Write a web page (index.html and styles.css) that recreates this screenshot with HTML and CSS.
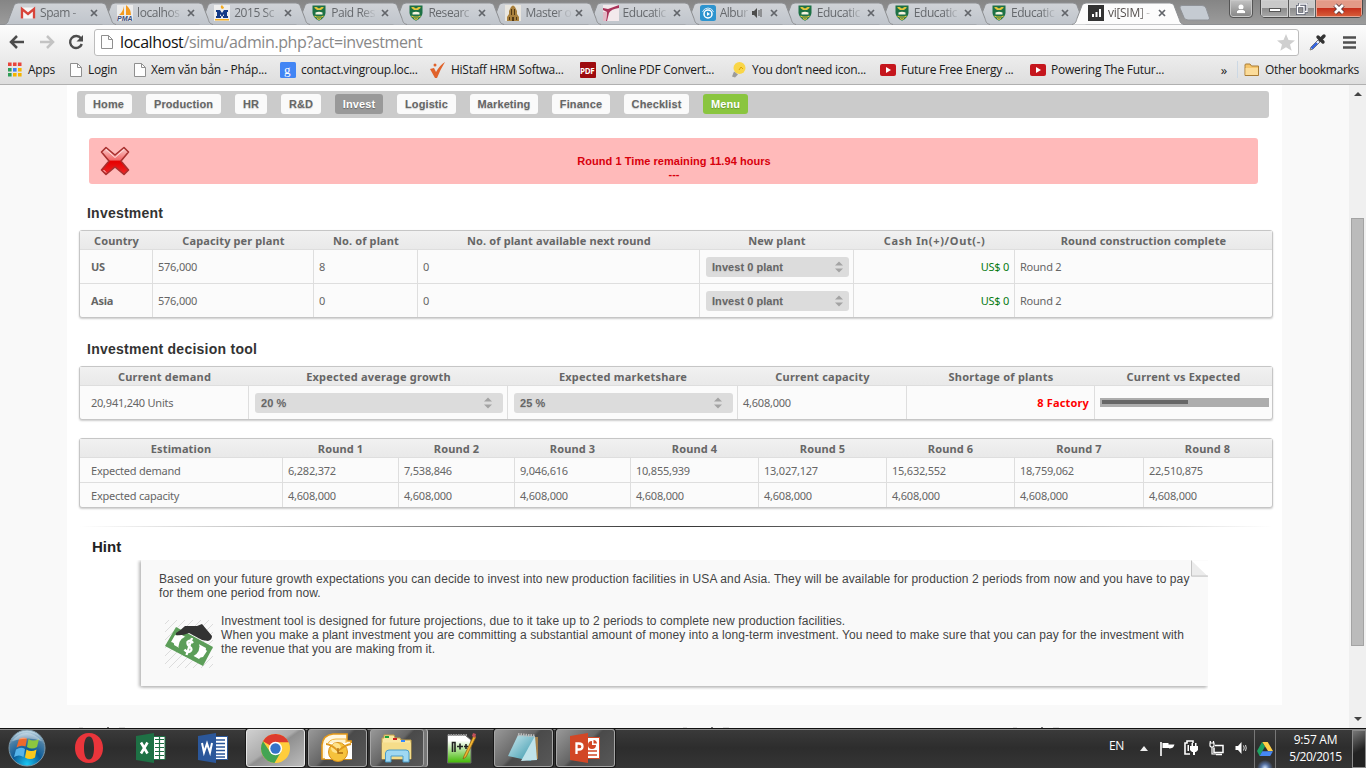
FILE: index.html
```html
<!DOCTYPE html>
<html lang="en">
<head>
<meta charset="utf-8">
<title>vi[SIM] - Investment</title>
<link rel="stylesheet" href="styles.css">
</head>
<body>
<svg class="defs" width="0" height="0">
  <defs>
    <linearGradient id="gTab" x1="0" y1="0" x2="0" y2="1"><stop offset="0" stop-color="#d0d3d7"/><stop offset="1" stop-color="#c0c5cc"/></linearGradient>
    <linearGradient id="gRed" x1="0" y1="0" x2="0" y2="1"><stop offset="0" stop-color="#fbd0d0"/><stop offset=".45" stop-color="#f26a6a"/><stop offset=".52" stop-color="#e60000"/><stop offset="1" stop-color="#ea2a2a"/></linearGradient>
    <radialGradient id="gOrb" cx=".5" cy=".95" r=".9"><stop offset="0" stop-color="#19c8f5"/><stop offset=".45" stop-color="#0c5b98"/><stop offset=".8" stop-color="#4b7fa5"/><stop offset="1" stop-color="#b9d3e2"/></radialGradient>
    <linearGradient id="gNpp" x1="0" y1="0" x2="0" y2="1"><stop offset=".2" stop-color="#fff"/><stop offset="1" stop-color="#3fb800"/></linearGradient>
    <linearGradient id="gNote" x1="0" y1="0" x2="1" y2="1"><stop offset="0" stop-color="#cfeaf0"/><stop offset="1" stop-color="#2f93a8"/></linearGradient>
  </defs>
  <symbol id="tab" viewBox="0 0 112 24"><path d="M0 24C4 23 4 21 5 18L10 5Q11 2.500 14 2.500H98Q101 2.500 102 5L107 18C108 21 108 23 112 24" stroke="#8d8f92" fill="url(#gTab)"/></symbol>
  <symbol id="tabOn" viewBox="0 0 112 24"><path d="M0 24C4 23 4 21 5 18L10 5Q11 2.500 14 2.500H98Q101 2.500 102 5L107 18C108 21 108 23 112 24" stroke="#8d8f92" fill="#fcfcfc"/></symbol>
  <symbol id="crest" viewBox="0 0 16 16"><path d="M1.500.5H14.500V8Q14 13 8 15.800Q2 13 1.500 8Z" fill="#1d7145"/><path d="M3.500 2h2l2.500 1.500L10.500 2h2v1L10 5H6L3.500 3Z" fill="#e2c63c"/><path d="M4.500 7.500Q8 6 11.500 7.500V9.500H4.500Z" fill="#f6f2df"/><path d="M3.500 11l2 1h5l2-1M6 13.500l2 .8 2-.8" fill="none" stroke="#e2c63c" stroke-width="1.200"/></symbol>
  <symbol id="doc" viewBox="0 0 16 16"><path d="M2.500 1.500H9.500L13.500 5.500V14.500H2.500Z" fill="#fdfdfd" stroke="#8f8f8f"/><path d="M9.500 1.500V5.500H13.500" fill="none" stroke="#8f8f8f"/></symbol>
  <symbol id="yt" viewBox="0 0 16 16"><rect y="2" width="16" height="12" rx="2" fill="#c5161d"/><path d="M6 5l5 3-5 3Z" fill="#fff"/></symbol>
  <symbol id="close" viewBox="0 0 8 8"><path d="M1 1l6 6M7 1L1 7" stroke="#62656a" stroke-width="1.700"/></symbol>
  <symbol id="spin" viewBox="0 0 8 12"><path d="M4 .5l4 4H0ZM4 11.500l4-4H0Z" fill="#a3a3a3"/></symbol>
</svg>

<header class="tabstrip">
  <div class="tab"><svg class="shape"><use href="#tab"/></svg><svg class="ico" viewBox="0 0 16 16"><rect x="1" y="2.500" width="14" height="11" fill="#f5f5f5"/><path d="M2 13.500V4l6 5 6-5v9.500" fill="none" stroke="#d8443a" stroke-width="2.300"/></svg><span class="name">Spam -</span><svg class="x"><use href="#close"/></svg></div>
  <div class="tab"><svg class="shape"><use href="#tab"/></svg><svg class="ico" viewBox="0 0 16 16"><rect width="16" height="16" fill="#ececec"/><path d="M7 1v9H2Q6 7 7 1M9 0q5 4 5 10H9Z" fill="#f39a1e"/><text x="0" y="16" class="pma">PMA</text></svg><span class="name">localhos</span><svg class="x"><use href="#close"/></svg></div>
  <div class="tab"><svg class="shape"><use href="#tab"/></svg><svg class="ico" viewBox="0 0 16 16"><rect width="16" height="16" fill="#eee"/><path d="M7 3Q6 1 8 0Q9 2 10 2Q10 4 8 4M1 14h14v1.500H1Z" fill="#f3ab20"/><path d="M2 5h4l2 3 2-3h4v2h-1v4h1v2h-5v-2h1V9l-2 3-2-3v2h1v2H2v-2h1V7H2Z" fill="#143a86"/></svg><span class="name">2015 Sc</span><svg class="x"><use href="#close"/></svg></div>
  <div class="tab"><svg class="shape"><use href="#tab"/></svg><svg class="ico"><use href="#crest"/></svg><span class="name">Paid Res</span><svg class="x"><use href="#close"/></svg></div>
  <div class="tab"><svg class="shape"><use href="#tab"/></svg><svg class="ico"><use href="#crest"/></svg><span class="name">Researc</span><svg class="x"><use href="#close"/></svg></div>
  <div class="tab"><svg class="shape"><use href="#tab"/></svg><svg class="ico" viewBox="0 0 16 16"><rect width="16" height="16" fill="#e9e6df"/><path d="M6 2Q8-1 10 2L12 6v3l2 3v4H2v-4l2-3V6Z" fill="#a9803c"/><path d="M6 4h1v6H6zM9 4h1v6H9zM7 12h2v4H7zM4 12h1v3H4zM11 12h1v3h-1z" fill="#513814"/></svg><span class="name">Master o</span><svg class="x"><use href="#close"/></svg></div>
  <div class="tab"><svg class="shape"><use href="#tab"/></svg><svg class="ico" viewBox="0 0 16 16"><rect width="16" height="16" fill="#f3e9ec"/><path d="M0 3l5 1L16 0v3Q8 4 6 8L4 16H3L4 7 0 5Z" fill="#a93359"/><path d="M0 7h4l-1 9H0Z" fill="#e3b9c6"/></svg><span class="name">Educatic</span><svg class="x"><use href="#close"/></svg></div>
  <div class="tab"><svg class="shape"><use href="#tab"/></svg><svg class="ico" viewBox="0 0 16 16"><rect width="16" height="16" rx="2.500" fill="#2d94cf"/><circle cx="8" cy="9" r="4" fill="none" stroke="#fff" stroke-width="1.500"/><path d="M7 7l3 2-3 2z" fill="#fff"/><path d="M2.500 7Q4 3 8 3T13.500 7" fill="none" stroke="#fff" stroke-width=".8"/></svg><span class="name short">Albur</span><svg class="snd" viewBox="0 0 10 10"><path d="M0 3h2l3-3v10L2 7H0Z" fill="#4c4c4c"/><path d="M7 2v6M9 1v8" stroke="#555"/></svg><svg class="x"><use href="#close"/></svg></div>
  <div class="tab"><svg class="shape"><use href="#tab"/></svg><svg class="ico"><use href="#crest"/></svg><span class="name">Educatic</span><svg class="x"><use href="#close"/></svg></div>
  <div class="tab"><svg class="shape"><use href="#tab"/></svg><svg class="ico"><use href="#crest"/></svg><span class="name">Educatic</span><svg class="x"><use href="#close"/></svg></div>
  <div class="tab"><svg class="shape"><use href="#tab"/></svg><svg class="ico"><use href="#crest"/></svg><span class="name">Educatic</span><svg class="x"><use href="#close"/></svg></div>
  <div class="tab on"><svg class="shape"><use href="#tabOn"/></svg><svg class="ico" viewBox="0 0 16 16"><rect width="16" height="16" fill="#333"/><path d="M4 9h2v3H4zM7.500 7h2v5h-2zM11 4h2v8h-2z" fill="#fff"/></svg><span class="name">vi[SIM] -</span><svg class="x"><use href="#close"/></svg></div>
  <svg class="newtab" viewBox="0 0 32 16"><path d="M3 .5H23Q26 .5 27 3L30.500 13Q31 15 28.500 15H9Q6 15 5 12.500L1 3Q.5.5 3 .5Z" fill="#c5cbd2" stroke="#8f9297"/></svg>
  <div class="user"><svg viewBox="0 0 10 10" width="10" height="10"><circle cx="5" cy="3" r="2.500" fill="#fff"/><path d="M.5 9.500V7L3 5.500h4L9.500 7v2.500Z" fill="#fff" stroke="#555" stroke-width=".4"/></svg></div>
  <div class="winbtns">
    <i class="wb min"><svg viewBox="0 0 12 12" width="12" height="12"><rect x=".5" y="5.500" width="11" height="3" fill="#fff" stroke="#555"/></svg></i>
    <i class="wb max"><svg viewBox="0 0 12 12" width="12" height="12"><path d="M3.500 3V1h7.500v7.500H9M1.500 3.500H8v7H1.500Z" fill="none" stroke="#4e5364" stroke-width="2.800"/><path d="M3.500 3V1h7.500v7.500H9M1.500 3.500H8v7H1.500Z" fill="none" stroke="#fff" stroke-width="1.400"/></svg></i>
    <i class="wb cls"><svg viewBox="0 0 12 12" width="12" height="12"><path d="M2 2l8 8M10 2l-8 8" stroke="#553338" stroke-width="4.500"/><path d="M2 2l8 8M10 2l-8 8" stroke="#fff" stroke-width="2.800"/></svg></i>
  </div>
</header>

<div class="toolbar">
  <svg class="tb back" viewBox="0 0 16 14"><path d="M8 1L2 7l6 6M2.500 7H15" fill="none" stroke="#4c4c4c" stroke-width="2.500"/></svg>
  <svg class="tb fwd" viewBox="0 0 16 14"><path d="M8 1l6 6-6 6M13.500 7H1" fill="none" stroke="#c3c3c3" stroke-width="2.500"/></svg>
  <svg class="tb rel" viewBox="0 0 16 16"><path d="M13 4.500A6 6 0 1 0 13.800 10" fill="none" stroke="#4c4c4c" stroke-width="2.400"/><path d="M15 1v6.500H8.500Z" fill="#4c4c4c"/></svg>
  <div class="omni"><svg class="odoc"><use href="#doc"/></svg><span class="url"><b>localhost</b>/simu/admin.php?act=investment</span><svg class="star" viewBox="0 0 18 17"><path d="M9 0l2.500 6 6.500.4-5 4.100 1.700 6.300L9 13.300l-5.700 3.500L5 10.500 0 6.400 6.500 6Z" fill="#cfcfcf"/></svg></div>
  <svg class="pick" viewBox="0 0 18 18"><path d="M1 17l1-3 8-8 2 2-8 8Z" fill="#e8eefc" stroke="#777"/><path d="M2.500 15.500L8 10" stroke="#2e60e0" stroke-width="2.400"/><path d="M9 4l5 5M11 7l4-4" stroke="#333" stroke-width="3.400" stroke-linecap="round"/></svg>
  <svg class="menu" viewBox="0 0 13 13"><path d="M0 1.500h13M0 6.500h13M0 11.500h13" stroke="#4f4f4f" stroke-width="2.600"/></svg>
</div>

<nav class="marks">
  <a class="bm w62"><svg class="ico" viewBox="0 0 16 16"><path d="M0 1h4v4H0zM5.500 1h4v4h-4zM11 1h4v4h-4z" fill="#e8453c" transform="translate(0 -.5) scale(.9)"/><path d="M0 6h3.600v3.600H0zM0 11h3.600v3.600H0z" fill="#2f9e57"/><path d="M5 6h3.600v3.600H5z" fill="#3f7ff0"/><path d="M10 6h3.600v3.600H10zM10 11h3.600v3.600H10zM5 11h3.600v3.600H5z" fill="#f4b400"/></svg><span>Apps</span></a>
  <a class="bm w63"><svg class="ico"><use href="#doc"/></svg><span>Login</span></a>
  <a class="bm w148"><svg class="ico"><use href="#doc"/></svg><span>Xem văn bản - Pháp...</span></a>
  <a class="bm w150"><svg class="ico" viewBox="0 0 16 16"><rect width="16" height="16" rx="1.500" fill="#4285f4"/><text x="4" y="12" class="gg">g</text></svg><span>contact.vingroup.loc...</span></a>
  <a class="bm w150"><svg class="ico" viewBox="0 0 16 16"><path d="M0 7l4-1 2 4Q10 3 15 0Q10 8 7 16H5Z" fill="#e0622b"/><circle cx="5" cy="3" r="1.500" fill="#e0622b"/></svg><span>HiStaff HRM Softwa...</span></a>
  <a class="bm w151"><svg class="ico" viewBox="0 0 16 16"><rect width="16" height="16" rx="1" fill="#9e0b0f"/><text x="0" y="11.500" class="pdf">PDF</text></svg><span>Online PDF Convert...</span></a>
  <a class="bm w149"><svg class="ico" viewBox="0 0 16 16"><circle cx="8.500" cy="6" r="6" fill="#f9d648"/><path d="M8 8l2-3 2 2" fill="none" stroke="#e0a400"/><path d="M3 9.500l4 3-3 3-3-1Z" fill="#9b9b9b"/></svg><span>You don’t need icon...</span></a>
  <a class="bm w150"><svg class="ico"><use href="#yt"/></svg><span>Future Free Energy ...</span></a>
  <a class="bm w150"><svg class="ico"><use href="#yt"/></svg><span>Powering The Futur...</span></a>
  <span class="more">»</span>
  <a class="bm other"><svg class="ico" viewBox="0 0 16 16"><path d="M1 4.500V3Q1 2 2 2H6L7.500 4H14.500V13.500H1Z" fill="#f5c56b" stroke="#a87b34"/><path d="M1.500 6H14V13H1.500Z" fill="#fbdc9a"/></svg><span>Other bookmarks</span></a>
</nav>

<div class="viewport">
  <main class="sheet">
    <nav class="nav">
      <a class="n1">Home</a><a class="n2">Production</a><a class="n3">HR</a><a class="n4">R&amp;D</a><a class="n5 cur">Invest</a><a class="n6">Logistic</a><a class="n7">Marketing</a><a class="n8">Finance</a><a class="n9">Checklist</a><a class="n10 grn">Menu</a>
    </nav>
    <div class="alert">
      <svg class="cross" viewBox="0 0 30 30"><path d="M6 1.500L15 9 24 1.500 28.500 6 21 15 28.500 24 24 28.500 15 21 6 28.500 1.500 24 9 15 1.500 6Z" fill="url(#gRed)" stroke="#a8302f" stroke-width="1.600" stroke-linejoin="round"/><path d="M6 3.500L15 11.500 24 3.500M3.500 24L6 26.500" fill="none" stroke="#fde0e0" stroke-width="1"/></svg>
      <p>Round 1 Time remaining 11.94 hours<br>---</p>
    </div>

    <h2 class="h-inv">Investment</h2>
    <section class="grid g1">
      <div class="th">Country</div><div class="th">Capacity per plant</div><div class="th">No. of plant</div><div class="th">No. of plant available next round</div><div class="th">New plant</div><div class="th cash">Cash In(+)/Out(-)</div><div class="th">Round construction complete</div>
      <div class="td lead b">US</div><div class="td">576,000</div><div class="td">8</div><div class="td">0</div><div class="td"><div class="sel">Invest 0 plant<svg><use href="#spin"/></svg></div></div><div class="td r ok">US$ 0</div><div class="td">Round 2</div>
      <div class="td lead b">Asia</div><div class="td">576,000</div><div class="td">0</div><div class="td">0</div><div class="td"><div class="sel">Invest 0 plant<svg><use href="#spin"/></svg></div></div><div class="td r ok">US$ 0</div><div class="td">Round 2</div>
    </section>

    <h2 class="h-tool">Investment decision tool</h2>
    <section class="grid g2">
      <div class="th">Current demand</div><div class="th">Expected average growth</div><div class="th">Expected marketshare</div><div class="th">Current capacity</div><div class="th">Shortage of plants</div><div class="th">Current vs Expected</div>
      <div class="td lead">20,941,240 Units</div><div class="td"><div class="sel far">20 %<svg><use href="#spin"/></svg></div></div><div class="td"><div class="sel far">25 %<svg><use href="#spin"/></svg></div></div><div class="td">4,608,000</div><div class="td r bad">8 Factory</div><div class="td"><div class="meter"><i></i></div></div>
    </section>

    <section class="grid g3">
      <div class="th">Estimation</div><div class="th">Round 1</div><div class="th">Round 2</div><div class="th">Round 3</div><div class="th">Round 4</div><div class="th">Round 5</div><div class="th">Round 6</div><div class="th">Round 7</div><div class="th">Round 8</div>
      <div class="td lead">Expected demand</div><div class="td">6,282,372</div><div class="td">7,538,846</div><div class="td">9,046,616</div><div class="td">10,855,939</div><div class="td">13,027,127</div><div class="td">15,632,552</div><div class="td">18,759,062</div><div class="td">22,510,875</div>
      <div class="td lead">Expected capacity</div><div class="td">4,608,000</div><div class="td">4,608,000</div><div class="td">4,608,000</div><div class="td">4,608,000</div><div class="td">4,608,000</div><div class="td">4,608,000</div><div class="td">4,608,000</div><div class="td">4,608,000</div>
    </section>

    <div class="rule"></div>
    <h2 class="h-hint">Hint</h2>
    <article class="note">
      <svg class="fold" viewBox="0 0 18 18"><path d="M0 0H18V18Z" fill="#fff"/><path d="M.5 0V17H18Z" fill="#ececec"/><path d="M.5 0V16.500H18" fill="none" stroke="#bdbdbd"/></svg>
      <p class="l1">Based on your future growth expectations you can decide to invest into new production facilities in USA and Asia. They will be available for production 2 periods from now and you have to pay</p>
      <p class="l2">for them one period from now.</p>
      <div class="tip">
        <svg class="money" viewBox="0 0 48 48"><path d="M0 4L4 0M0 12L12 0M0 20L20 0M0 28L28 0M0 36L36 0M0 44L44 0M4 48L48 4M12 48L48 12M20 48L48 20M28 48L48 28M36 48L48 36M44 48L48 44" stroke="#dcdcdc"/><path d="M11 7L48 27 38 46 0 26Z" fill="#5c9e59"/><path d="M15 14L41 28Q40 30 42 31L38 37Q35 37 34 39L9 25Q10 23 6 22L10 15Q13 16 15 14Z" fill="#fff"/><circle cx="24" cy="26.500" r="10.500" fill="#5c9e59"/><path d="M28 23Q25 19 22.500 22Q22 25 25 27Q28 29 25 31.500Q22 33 19.500 29.500M27 18L21.500 35" fill="none" stroke="#fff" stroke-width="2.300"/><path d="M11 13Q16 10 20 6L32 6 37 4 47 16Q47 20 43 21L37 20 24 13Q17 16 11 15Z" fill="#333"/></svg>
        <div>
          <p class="l3">Investment tool is designed for future projections, due to it take up to 2 periods to complete new production facilities.</p>
          <p class="l4">When you make a plant investment you are committing a substantial amount of money into a long-term investment. You need to make sure that you can pay for the investment with</p>
          <p class="l5">the revenue that you are making from it.</p>
        </div>
      </div>
    </article>
  </main>
  <div class="peek"><i></i><i></i><i></i></div>
  <aside class="scroll"><b class="up"></b><b class="thumb"></b><b class="down"></b></aside>
</div>

<footer class="taskbar">
  <div class="task"><svg width="40" height="38" viewBox="0 0 40 38"><circle cx="20" cy="19" r="18" fill="url(#gOrb)" stroke="#7d98a8"/><path d="M12 10Q16 7.500 20 9.500L18.500 17.500Q14 15.500 9.500 18.500Z" fill="#ee6a2c"/><path d="M21.500 10Q26 13 32 10L30 18Q25 21 20 18Z" fill="#8dc63f"/><path d="M9 20.500Q14 17.500 18 20L16.500 28Q12 25 7 28Z" fill="#56b4ea"/><path d="M19.500 20.500Q24 23.500 29.500 20.500L28 28.500Q23 31.500 18 28.500Z" fill="#fbc81c"/><path d="M5 12Q19-4 35 12Q22 7 5 12" fill="#fff" opacity=".35"/></svg></div>
  <div class="task"><svg width="30" height="32" viewBox="0 0 30 32"><path fill-rule="evenodd" d="M15 1C24 1 29 8 29 16S24 31 15 31 1 24 1 16 6 1 15 1M15 4.500C11 4.500 10 11 10 16S11 27.500 15 27.500 20 21 20 16 19 4.500 15 4.500Z" fill="#e9353b"/></svg></div>
  <div class="task"><svg width="30" height="30" viewBox="0 0 30 30"><path d="M17 3.500H29V26.500H17Z" fill="#fff" stroke="#1e7145"/><path d="M19 6.500h9M19 10.500h9M19 14.500h9M19 18.500h9M19 22.500h9M23.500 4v22" stroke="#1e7145" stroke-width="1.200"/><path d="M0 3L18 0V30L0 27Z" fill="#1e7145"/><path d="M5 9.500l6.500 11M11.500 9.500L5 20.500" stroke="#fff" stroke-width="2.600"/></svg></div>
  <div class="task"><svg width="30" height="30" viewBox="0 0 30 30"><path d="M17 3.500H29.500V26.500H17Z" fill="#fff" stroke="#2b579a"/><path d="M18 7h9M18 10.500h9M18 14h9M18 17.500h9M18 21h9M18 24h9" stroke="#2b579a" stroke-width="1.500"/><path d="M0 3L18 0V30L0 27Z" fill="#2b579a"/><path d="M4 10l2 9.500 3-9 3 9 2-9.500" fill="none" stroke="#fff" stroke-width="2"/></svg></div>
  <div class="task btn lit"><svg width="29" height="29" viewBox="0 0 28 28"><circle cx="14" cy="14" r="14" fill="#ffcd3c"/><path d="M14 14L1.900 7A14 14 0 0 1 26.600 8H14Z" fill="#dd3c2e"/><path d="M1.900 7A14 14 0 0 0 13 28L19.500 17 14 14 8.500 17Z" fill="#44a453"/><circle cx="14" cy="14" r="6.400" fill="#fff"/><circle cx="14" cy="14" r="5" fill="#3573c9"/></svg></div>
  <div class="task btn"><svg width="32" height="30" viewBox="0 0 32 30"><path d="M1 26V12Q2 2 12 1H26V8H30V26Z" fill="#fff7df" stroke="#e69a1a" stroke-width="1.600"/><path d="M6 22V14Q7 6 15 6h10v16" fill="#fdf1cd" stroke="#f2b640"/><path d="M4 10h27v16H4Z" fill="#fff"/><circle cx="17" cy="19" r="9.500" fill="#f6c23c" stroke="#d8901a"/><circle cx="15" cy="15" r="5" fill="#ffe28a"/><path d="M5 11q5 0 12 7 7-6 13-7" fill="none" stroke="#e09a20" stroke-width="1.800"/><path d="M17 15v5h5" fill="none" stroke="#a96a10" stroke-width="1.300"/></svg></div>
  <div class="task btn stack"><svg width="32" height="30" viewBox="0 0 32 30"><path d="M3 5V2H13l1 3h5l1 2h10V26H1V5Z" fill="#fae7a2" stroke="#c3a149"/><path d="M4 4h4" stroke="#1ba23a" stroke-width="2"/><path d="M12 6h4" stroke="#c22" stroke-width="2"/><path d="M20 8h4" stroke="#38f" stroke-width="2"/><path d="M1 9.500H30V26H1Z" fill="#f5dd8a"/><path d="M4.500 29V20Q5 17 8 17H25Q28 17 28 20V29H22V23H10V29Z" fill="#9fd8f2" stroke="#4a9cc8"/></svg></div>
  <div class="task"><svg width="30" height="32" viewBox="0 0 30 32"><path d="M1.500 3H19L25 8V31H1.500Z" fill="url(#gNpp)" stroke="#666"/><path d="M2 3h20" stroke="#999" stroke-width="2" stroke-dasharray="1.500 1"/><path d="M6.500 20V10.500H9V20M11 14.500h6M14 11.500v6M18 14.500h4M20 12v5" fill="none" stroke="#222" stroke-width="1.600"/><path d="M28 3L18 24l-1 3 3-2L30 5Z" fill="#f2b632" stroke="#8a5a10" stroke-width=".7"/><path d="M27 1l3 1-1 4-3-2Z" fill="#c0505a"/></svg></div>
  <div class="task btn"><svg width="30" height="30" viewBox="0 0 30 30"><path d="M26 4h4v22l-7 1Z" fill="#a5814a"/><path d="M10 2L27 3 23 28 0 23Z" fill="url(#gNote)"/><path d="M27 3L29 27 13 28Z" fill="#bfe3ea"/><path d="M10 1.500L27 3" stroke="#bbb" stroke-width="3" stroke-dasharray="1.500 1"/></svg></div>
  <div class="task btn"><svg width="30" height="30" viewBox="0 0 30 30"><path d="M17 4.500H29.500V25.500H17Z" fill="#fff" stroke="#d24726"/><path d="M18 18h9M18 22h9" stroke="#d24726" stroke-width="1.500"/><path d="M22 8a4 4 0 1 0 4 4h-4Z" fill="#d24726"/><path d="M23.500 7a4 4 0 0 1 3.500 3.500h-3.500Z" fill="#d24726"/><path d="M0 3L18 0V30L0 27Z" fill="#d24726"/><path d="M6.500 21V10.500H9Q12.500 10.500 12.500 13.500T9 16.500H6.500" fill="none" stroke="#fff" stroke-width="2.300"/></svg></div>
  <div class="tray">
    <span class="lang">EN</span>
    <svg class="t1" viewBox="0 0 8 5"><path d="M4 0L8 5H0Z" fill="#eee"/></svg>
    <svg class="t2" viewBox="0 0 15 15"><path d="M1 1v14" stroke="#fff" stroke-width="1.600"/><path d="M2.500 2h6v1.500h6Q14 5 13 6.500q-2 1-4 1V7H2.500Z" fill="#fff"/></svg>
    <svg class="t3" viewBox="0 0 14 16"><path d="M9 3V1H3v2H1v11h5" fill="none" stroke="#fff" stroke-width="1.600"/><path d="M6 6h8v4l-2 2H11v3H9v-3H8L6 10ZM7.500 3h1.500v3H7.500zM11 3h1.500v3H11zM3.500 5H5v6H3.500z" fill="#fff"/></svg>
    <svg class="t4" viewBox="0 0 15 15"><path d="M6 4.500h8v7H5v-5M7 13.500h6" fill="none" stroke="#fff" stroke-width="1.500"/><path d="M1 2h4v3L4 6H2L1 5ZM1.300 0v2M4.500 0v2M3 6v7h4" fill="none" stroke="#fff" stroke-width="1.200"/></svg>
    <svg class="t5" viewBox="0 0 12 14"><path d="M.5 5H3L6.500 1v12L3 9H.5Z" fill="#fff"/><path d="M8.500 4.500q1.500 2.500 0 5M10.500 4q1.500 3 0 6" fill="none" stroke="#ddd"/></svg>
    <div class="drive"><svg width="16" height="14" viewBox="0 0 16 14"><path d="M5 0L0 9l2.600 5L8 4.500Z" fill="#1da362"/><path d="M5.300 0h5.400L16 9h-5Z" fill="#ffcf48"/><path d="M5.300 9.200H16L13.200 14H2.600Z" fill="#4688f4"/></svg></div>
    <div class="clock"><span>9:57 AM</span><span>5/20/2015</span></div>
    <div class="desk"></div>
  </div>
</footer>
</body>
</html>
```
FILE: styles.css
```css
* { box-sizing: border-box; }
body { margin: 0; width: 1366px; height: 768px; overflow: hidden; display: flex; flex-direction: column; font-family: "Liberation Sans", Arial, sans-serif; background: #f9f9f9; }
svg { display: block; flex: none; }
p, h2 { margin: 0; }
.defs { position: absolute; }
.ico { width: 16px; height: 16px; }

/* tab strip */
.tabstrip { height: 25px; flex: none; display: flex; align-items: flex-start; padding-left: 6px; position: relative; background: linear-gradient(#858585, #9b9b9b); border-bottom: 1px solid #8d8f92; font: 12px "Open Sans", sans-serif; }
.tab { width: 97.100px; height: 25px; flex: none; position: relative; display: flex; align-items: center; padding-left: 14px; color: #66696d; }
.tab:nth-child(1) { z-index: 12; } .tab:nth-child(2) { z-index: 11; } .tab:nth-child(3) { z-index: 10; } .tab:nth-child(4) { z-index: 9; } .tab:nth-child(5) { z-index: 8; } .tab:nth-child(6) { z-index: 7; } .tab:nth-child(7) { z-index: 6; } .tab:nth-child(8) { z-index: 5; } .tab:nth-child(9) { z-index: 4; } .tab:nth-child(10) { z-index: 3; } .tab:nth-child(11) { z-index: 2; }
.tab.on { z-index: 13; color: #55504e; }
.shape { position: absolute; left: -2px; top: 0; width: 112px; height: 25px; z-index: -1; }
.name { width: 47px; margin-left: 4px; white-space: nowrap; letter-spacing: -.45px; -webkit-mask-image: linear-gradient(90deg, #000 30px, rgba(0,0,0,.15) 43px); mask-image: linear-gradient(90deg, #000 30px, rgba(0,0,0,.15) 43px); }
.tab.on .name { letter-spacing: -.3px; }
.name.short { width: 31px; -webkit-mask-image: linear-gradient(90deg, #000 18px, rgba(0,0,0,.2) 28px); mask-image: linear-gradient(90deg, #000 18px, rgba(0,0,0,.2) 28px); }
.snd { width: 10px; height: 10px; margin: 0 1px; }
.x { width: 8px; height: 8px; margin-left: 3px; }
.snd + .x { margin-left: 7px; }
.newtab { width: 32px; height: 16px; margin: 5px 0 0 8px; }
.user { position: absolute; left: 1229px; top: -1px; width: 24px; height: 19px; border: 1px solid #555; border-radius: 0 0 4px 4px; background: linear-gradient(#c3c3c3, #858585); box-shadow: inset 0 0 0 1px #c8c8c8; display: grid; place-items: center; }
.winbtns { position: absolute; left: 1260px; top: -1px; width: 103px; height: 19px; display: flex; border: 1px solid #4c4c4c; border-radius: 0 0 5px 5px; overflow: hidden; }
.wb { display: grid; place-items: center; border-right: 1px solid #5a5a5a; background: linear-gradient(#c9c9c9 45%, #8c8c8c 50%, #a9a9a9); box-shadow: inset 0 0 0 1px #cfcfcf; }
.min { width: 28px; } .max { width: 27px; }
.cls { flex: 1; border: 0; background: linear-gradient(#e39a87 45%, #c6301c 50%, #d8603a); box-shadow: inset 0 0 0 1px #e8a594; }

/* toolbar */
.toolbar { height: 32px; flex: none; display: flex; align-items: center; padding: 2px 0 0 9px; background: linear-gradient(#fcfcfc, #ececec); }
.back { width: 16px; height: 14px; } .fwd { width: 16px; height: 14px; margin-left: 14px; } .rel { width: 16px; height: 16px; margin-left: 13px; }
.omni { width: 1205px; height: 27px; margin-left: 10px; border: 1px solid #bcbcbc; border-radius: 3px; background: #fff; display: flex; align-items: center; }
.odoc { width: 16px; height: 16px; margin-left: 4px; }
.url { margin-left: 5px; font: 16px "Open Sans", sans-serif; letter-spacing: -.4px; color: #888; flex: 1; }
.url b { font-weight: 400; color: #111; }
.star { width: 18px; height: 17px; margin-right: 3px; }
.pick { width: 18px; height: 18px; margin-left: 10px; }
.menu { width: 13px; height: 13px; margin-left: 16px; }

/* bookmarks */
.marks { height: 28px; flex: none; display: flex; align-items: center; padding: 0 0 2px 8px; border-bottom: 1px solid #b0b0b0; background: linear-gradient(#ececec, #dedede); font: 12px "Open Sans", sans-serif; color: #1b1b1b; letter-spacing: -.27px; }
.bm { display: flex; align-items: center; gap: 5px; white-space: nowrap; flex: none; }
.w62 { width: 60px; gap: 4px; } .w63 { width: 64px; gap: 4px; } .w148 { width: 148px; gap: 3px; } .w149 { width: 149px; } .w150 { width: 150px; } .w151 { width: 151px; }
.w148 { letter-spacing: -.22px; }
.more { width: 57px; text-align: right; padding-right: 10px; font-size: 13px; }
.more + .other { border-left: 1px solid #ccd8e4; padding-left: 6px; margin-left: 0; letter-spacing: -.3px; }
.pma { font: bold italic 7px "Liberation Sans", sans-serif; fill: #3b4a78; }
.gg { font: 13px "Liberation Serif", serif; fill: #fff; }
.pdf { font: bold 8px "Open Sans", sans-serif; fill: #fff; letter-spacing: -.3px; }

/* page */
.viewport { height: 643px; flex: none; position: relative; padding-left: 67px; overflow: hidden; background: #f9f9f9; }
.sheet { width: 1215px; height: 620px; padding: 6px 9px 0 10px; background: #fff; }
.nav { width: 1192px; height: 27px; padding: 3px 8px; display: flex; gap: 14px; background: #cbcbcb; border-radius: 3px; font-weight: bold; font-size: 11px; color: #666; }
.nav a { height: 20px; line-height: 20px; text-align: center; border-radius: 3px; background: #fafafa; text-shadow: 0 1px 1px #ccc; letter-spacing: .1px; }
.n1 { width: 47px; } .n2 { width: 75px; } .n3 { width: 32px; } .n4 { width: 40px; } .n5 { width: 48px; } .n6 { width: 59px; } .n7 { width: 68px; } .n8 { width: 58px; } .n9 { width: 65px; } .n10 { width: 45px; }
.nav .cur { background: #999; color: #fff; text-shadow: 0 1px 1px #666; }
.nav .grn { background: #8ac53f; color: #fff; text-shadow: 0 1px 1px #693; }
.alert { width: 1169px; height: 46px; margin: 20px 0 0 12px; padding: 8px 0 0 11px; display: flex; border-radius: 3px; background: #ffbaba; color: #d8000c; font-weight: bold; font-size: 11px; line-height: 13px; letter-spacing: .05px; }
.cross { width: 30px; height: 30px; }
.alert p { flex: 1; text-align: center; padding: 9px 40px 0 0; }
h2 { font-size: 14px; line-height: 16px; color: #333; }
.h-inv { margin: 21px 0 9px 10px; letter-spacing: .22px; }
.h-tool { margin: 23px 0 9px 10px; letter-spacing: .25px; }
.h-hint { margin: 12px 0 5px 15px; font-size: 15px; color: #222; }

/* data grids */
.grid { display: grid; width: 1194px; margin-left: 2px; border: 1px solid #c6c6c6; border-radius: 3px; background: #fbfbfb; box-shadow: 0 1px 2px #ccc; font: 11px "Noto Sans", sans-serif; letter-spacing: -.23px; color: #666; }
.g1 { grid-template: 19px 34px 33px / 73px 161px 104px 282px 154px 161px 257px; }
.g2 { grid-template: 19px 33px / 169px 259px 230px 169px 188px 177px; }
.g3 { grid-template: 19px 25px 24px / 203px 116px 116px 116px 128px 128px 128px 129px 128px; margin-top: 18px; }
.th { display: flex; align-items: center; justify-content: center; font-weight: bold; letter-spacing: .12px; background: linear-gradient(#f1f1f1, #e9e9e9); border-bottom: 1px solid #dedede; white-space: nowrap; }
.g2 .th { letter-spacing: .22px; }
.g1 .cash { letter-spacing: .65px; }
.g3 .th { padding-right: 1px; }
.td { display: flex; align-items: center; padding: 0 4px 0 5px; border-right: 1px solid #dedede; border-bottom: 1px solid #dedede; white-space: nowrap; }
.g1 > :nth-child(7n), .g2 > :nth-child(6n), .g3 > :nth-child(9n) { border-right: 0; }
.g1 > :nth-child(n+15), .g2 > :nth-child(n+7), .g3 > :nth-child(n+19) { border-bottom: 0; }
.td.lead { padding-left: 11px; }
.b { font-weight: bold; }
.td.r { justify-content: flex-end; padding-right: 5px; }
.ok { color: #077a12; }
.bad { color: #f00; font-weight: bold; letter-spacing: .15px; }
.sel { flex: 1; height: 20px; margin-left: 1px; padding: 0 6px; display: flex; align-items: center; justify-content: space-between; border-radius: 3px; background: #dcdcdc; font: bold 11px "Liberation Sans", sans-serif; letter-spacing: .05px; text-shadow: 0 1px 1px #c5c5c5; }
.sel.far { padding-right: 11px; }
.sel svg { width: 8px; height: 12px; }
.meter { width: 169px; flex: none; height: 9px; padding: 2px; background: #adadad; }
.meter i { display: block; width: 86px; height: 4px; background: #666; }

.rule { width: 1194px; height: 1px; margin: 18px 0 0 2px; background: linear-gradient(90deg, transparent, #333 50%, transparent); }
.note { width: 1067px; height: 126px; margin-left: 64px; padding: 12px 0 0 18px; position: relative; background: #f9f9f9; box-shadow: -2px 1px 3px #bbb, 0 2px 3px -1px #bbb; clip-path: inset(0 0 -6px -6px); font-size: 12px; line-height: 14px; color: #444; white-space: nowrap; }
.l1 { letter-spacing: .106px; } .l2 { letter-spacing: .08px; } .l3 { letter-spacing: .07px; } .l4 { letter-spacing: .068px; } .l5 { letter-spacing: .05px; }
.fold { position: absolute; right: 0; top: 0; width: 17px; height: 18px; }
.tip { display: flex; padding: 14px 0 0 6px; gap: 8px; }
.money { width: 48px; height: 48px; margin-top: 6px; }
.peek { display: flex; padding-top: 22px; }
.peek i { width: 604px; height: 1px; background: linear-gradient(90deg, transparent 12px, #ddd 12px 16px, transparent 16px 40px, #777 40px 42px, transparent 42px 52px, #ddd 52px 58px, transparent 58px); flex: none; }
.peek i + i { width: 330px; }

/* scrollbar */
.scroll { position: absolute; right: 0; top: 0; width: 17px; height: 643px; background: #f0f0f0; display: flex; flex-direction: column; align-items: center; }
.up { border: 4px solid transparent; border-top: 0; border-bottom: 4px solid #444; margin-top: 7px; }
.thumb { width: 13px; height: 428px; margin-top: 122px; border: 1px solid #a3a3a3; background: #bbb; }
.down { border: 4px solid transparent; border-bottom: 0; border-top: 4px solid #444; margin-top: 71px; }

/* taskbar */
.taskbar { height: 40px; flex: none; display: flex; position: relative; background: linear-gradient(#111 1px, #8a8a8a 1px 2px, #3a3a3a 2px, #2d2d2d 50%, #353535); }
.task { width: 62px; height: 40px; flex: none; display: grid; place-items: center; position: relative; }
.task:first-child { margin-left: -4px; }
.task > svg { position: relative; }
.btn::before { content: ""; position: absolute; left: 2px; right: 1px; top: 1px; bottom: 1px; border: 1px solid #a5a5a5; border-radius: 3px; background: linear-gradient(135deg, #989898, #666 45%, #4a4a4a 50%, #585858); box-shadow: 0 0 0 1px #181818; }
.lit::before { background: linear-gradient(145deg, #d0d0d0, #acacac 45%, #8f8f8f 50%, #bcbcbc); border-color: #e6e6e6; }
.stack::before { right: 6px; box-shadow: 3px 0 0 #777, 4px 0 0 #bbb; }
.stack > svg { left: -2px; }
.tray { margin-left: auto; display: flex; align-items: center; color: #fff; font: 12px "Open Sans", sans-serif; }
.lang { width: 31px; padding-bottom: 5px; letter-spacing: -.3px; }
.t1 { width: 8px; height: 5px; margin-right: 12px; }
.t2 { width: 15px; height: 15px; margin-right: 9px; }
.t3 { width: 14px; height: 16px; margin-right: 11px; }
.t4 { width: 15px; height: 15px; margin-right: 11px; }
.t5 { width: 12px; height: 14px; margin-right: 7px; }
.drive { width: 22px; height: 38px; margin-top: 2px; display: grid; place-items: center; border: solid #777; border-width: 0 1px; background: radial-gradient(circle at 50% 100%, #cfe3ff, #5570a0 4px, transparent 8px); }
.clock { width: 76px; padding-left: 3px; display: flex; flex-direction: column; align-items: center; line-height: 17px; letter-spacing: -.5px; }
.clock span:first-child { letter-spacing: -.25px; }
.desk { width: 14px; height: 38px; margin-top: 1px; border: 1px solid #8a8a8a; background: linear-gradient(150deg, #777, #222 55%); }
```
